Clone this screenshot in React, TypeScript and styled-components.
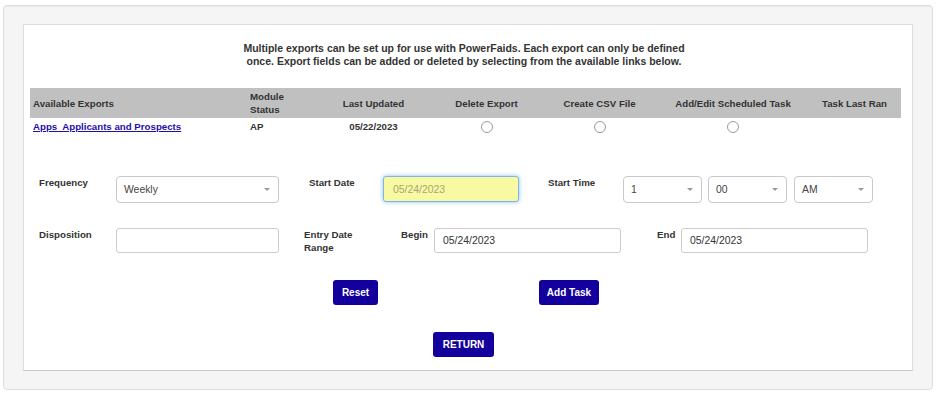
import React from "react";
import styled, { createGlobalStyle } from "styled-components";

const GlobalStyle = createGlobalStyle`
  html, body { margin: 0; padding: 0; background: #fff; }
  body { font-family: "Liberation Sans", Arial, Helvetica, sans-serif; color: #333; }
`;

const Well = styled.div`
  margin: 5px 3px 0;
  padding: 18px 19px;
  background: #f5f5f5;
  border: 1px solid #dcdcdc;
  border-radius: 4px;
  box-shadow: inset 0 1px 1px rgba(0, 0, 0, 0.04);
`;

const Panel = styled.div`
  background: #fff;
  border: 1px solid #ddd;
  border-bottom-color: #c8c8c8;
  padding: 17px 0 13px;
`;

const Intro = styled.p`
  margin: 0 0 20px 214px;
  width: 452px;
  text-align: center;
  font-size: 10.5px;
  font-weight: bold;
  line-height: 13px;
  color: #333;
`;

const Table = styled.table`
  margin-left: 6px;
  width: 871px;
  border-collapse: collapse;
  table-layout: fixed;
  font-size: 9.7px;
  font-weight: bold;
  line-height: 13px;
  color: #333;
`;

const HeadRow = styled.tr`
  background: #c0c0c0;
  height: 30px;
`;

const Th = styled.th<{ $align?: string; $pl?: number; $pr?: number }>`
  padding: 2px ${(p) => p.$pr ?? 3}px 2px ${(p) => p.$pl ?? 3}px;
  text-align: ${(p) => p.$align ?? "center"};
  font-weight: bold;
  vertical-align: middle;
  white-space: nowrap;
`;

const Td = styled.td<{ $align?: string; $pl?: number; $pr?: number }>`
  padding: 2px ${(p) => p.$pr ?? 3}px 2px ${(p) => p.$pl ?? 3}px;
  text-align: ${(p) => p.$align ?? "center"};
  vertical-align: middle;
  white-space: nowrap;
`;

const ExportLink = styled.a`
  color: #1f0ea8;
  text-decoration: underline;
  font-weight: bold;
`;

const Radio = styled.input`
  appearance: none;
  display: block;
  margin: 0 auto;
  width: 12px;
  height: 12px;
  border: 1px solid #9a9a9a;
  border-radius: 50%;
  background: #fff;
  box-sizing: border-box;
`;

const Form = styled.div`
  margin-top: 41px;
  padding-left: 15px;
  display: flex;
  flex-direction: column;
`;

const FormRow = styled.div<{ $mt?: number }>`
  display: flex;
  align-items: flex-start;
  margin-top: ${(p) => p.$mt ?? 0}px;
`;

const Label = styled.label<{ $w: number; $ml?: number }>`
  flex: none;
  width: ${(p) => p.$w}px;
  margin-left: ${(p) => p.$ml ?? 0}px;
  font-size: 9.7px;
  font-weight: bold;
  line-height: 13px;
  color: #333;
  white-space: nowrap;
`;

const SelectBox = styled.div<{ $w: number; $ml?: number }>`
  flex: none;
  box-sizing: border-box;
  width: ${(p) => p.$w}px;
  margin-left: ${(p) => p.$ml ?? 0}px;
  height: 27px;
  border: 1px solid #c9c9c9;
  border-radius: 4px;
  background: #fff;
  display: flex;
  align-items: center;
  justify-content: space-between;
  padding: 0 8px 0 7px;
  font-size: 10.4px;
  color: #444;
`;

const Caret = styled.span`
  width: 0;
  height: 0;
  border-left: 3px solid transparent;
  border-right: 3px solid transparent;
  border-top: 3px solid #999;
`;

const TextInput = styled.input<{ $w: number; $ml?: number }>`
  flex: none;
  box-sizing: border-box;
  width: ${(p) => p.$w}px;
  margin: 0 0 0 ${(p) => p.$ml ?? 0}px;
  height: 25px;
  border: 1px solid #cccccc;
  border-radius: 3px;
  padding: 0 8px;
  font-family: inherit;
  font-size: 10.4px;
  color: #333;
  background: #fff;
  outline: none;
`;

const DateInput = styled(TextInput)`
  height: 26px;
  background: #f7f9a3;
  border-color: #7fb6e6;
  color: #a7a676;
  padding-left: 9px;
  box-shadow: 0 0 4px rgba(102, 175, 233, 0.8);
`;

const ButtonRow = styled.div<{ $mt: number; $pl: number }>`
  display: flex;
  margin-top: ${(p) => p.$mt}px;
  padding-left: ${(p) => p.$pl}px;
`;

const Button = styled.button<{ $w: number; $ml?: number }>`
  flex: none;
  width: ${(p) => p.$w}px;
  margin-left: ${(p) => p.$ml ?? 0}px;
  height: 25px;
  padding: 0;
  border: none;
  border-radius: 3px;
  background: #13009c;
  color: #fff;
  font-family: inherit;
  font-size: 10px;
  font-weight: bold;
  cursor: pointer;
`;

function Select({ value, w, ml }: { value: string; w: number; ml?: number }) {
  return (
    <SelectBox $w={w} $ml={ml}>
      <span>{value}</span>
      <Caret />
    </SelectBox>
  );
}

export default function App() {
  return (
    <>
      <GlobalStyle />
      <Well>
        <Panel>
          <Intro>
            Multiple exports can be set up for use with PowerFaids. Each export can only be defined
            once. Export fields can be added or deleted by selecting from the available links below.
          </Intro>
          <Table>
            <colgroup>
              <col style={{ width: 217 }} />
              <col style={{ width: 86 }} />
              <col style={{ width: 81 }} />
              <col style={{ width: 145 }} />
              <col style={{ width: 81 }} />
              <col style={{ width: 178 }} />
              <col style={{ width: 83 }} />
            </colgroup>
            <thead>
              <HeadRow>
                <Th $align="left">Available Exports</Th>
                <Th $align="left">
                  Module
                  <br />
                  Status
                </Th>
                <Th>Last Updated</Th>
                <Th>Delete Export</Th>
                <Th>Create CSV File</Th>
                <Th $pl={11}>Add/Edit Scheduled Task</Th>
                <Th $align="left" $pl={4}>Task Last Ran</Th>
              </HeadRow>
            </thead>
            <tbody>
              <tr>
                <Td $align="left">
                  <ExportLink href="#">{"Apps\u00a0 Applicants and Prospects"}</ExportLink>
                </Td>
                <Td $align="left">AP</Td>
                <Td>05/22/2023</Td>
                <Td>
                  <Radio type="radio" name="act" />
                </Td>
                <Td>
                  <Radio type="radio" name="act" />
                </Td>
                <Td $pl={11}>
                  <Radio type="radio" name="act" />
                </Td>
                <Td $align="left" $pl={4}></Td>
              </tr>
            </tbody>
          </Table>

          <Form>
            <FormRow>
              <Label $w={77}>Frequency</Label>
              <Select value="Weekly" w={163} />
              <Label $w={74} $ml={30}>Start Date</Label>
              <DateInput $w={136} defaultValue="05/24/2023" readOnly />
              <Label $w={75} $ml={29}>Start Time</Label>
              <Select value="1" w={79} />
              <Select value="00" w={79} ml={6} />
              <Select value="AM" w={79} ml={7} />
            </FormRow>
            <FormRow $mt={25}>
              <Label $w={77}>Disposition</Label>
              <TextInput $w={163} />
              <Label $w={97} $ml={25}>
                Entry Date
                <br />
                Range
              </Label>
              <Label $w={33}>Begin</Label>
              <TextInput $w={187} defaultValue="05/24/2023" />
              <Label $w={24} $ml={36}>End</Label>
              <TextInput $w={187} defaultValue="05/24/2023" />
            </FormRow>
          </Form>

          <ButtonRow $mt={26} $pl={309}>
            <Button $w={45}>Reset</Button>
            <Button $w={60} $ml={161}>Add Task</Button>
          </ButtonRow>
          <ButtonRow $mt={27} $pl={409}>
            <Button $w={61}>RETURN</Button>
          </ButtonRow>
        </Panel>
      </Well>
    </>
  );
}
